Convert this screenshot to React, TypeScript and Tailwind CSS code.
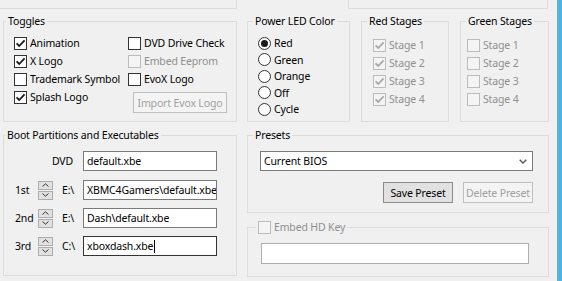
import { ReactNode } from "react";

function Group({
  title,
  className,
  legendClass,
  children,
}: {
  title: ReactNode;
  className: string;
  legendClass: string;
  children?: ReactNode;
}) {
  return (
    <fieldset className={`min-w-0 border border-[#dcdcdc] ${className}`}>
      <legend className={`px-[2px] leading-[14px] ${legendClass}`}>{title}</legend>
      {children}
    </fieldset>
  );
}

function Check({ checked, disabled }: { checked?: boolean; disabled?: boolean }) {
  return (
    <span
      className={`flex h-[13px] w-[13px] shrink-0 items-center justify-center border ${
        disabled ? "border-[#bcbcbc] bg-[#f4f4f4]" : "border-[#333333] bg-white"
      }`}
    >
      {checked && (
        <svg width="11" height="11" viewBox="0 0 11 11">
          <path
            d="M1.6 5.4 L4.2 8 L9.6 2.4"
            fill="none"
            stroke={disabled ? "#a8a8a8" : "#1a1a1a"}
            strokeWidth="1.8"
          />
        </svg>
      )}
    </span>
  );
}

function CheckRow({ label, checked, disabled }: { label: string; checked?: boolean; disabled?: boolean }) {
  return (
    <div className="flex h-[18px] items-center gap-[3px] whitespace-nowrap">
      <Check checked={checked} disabled={disabled} />
      <span className={disabled ? "text-[#8f8f8f]" : ""}>{label}</span>
    </div>
  );
}

function Radio({ label, checked }: { label: string; checked?: boolean }) {
  return (
    <div className="flex h-[16.5px] items-center gap-[3px]">
      <span className="flex h-[13px] w-[13px] items-center justify-center rounded-full border border-[#333333] bg-white">
        {checked && <span className="h-[7px] w-[7px] rounded-full bg-[#1a1a1a]" />}
      </span>
      <span>{label}</span>
    </div>
  );
}

function Spinner() {
  return (
    <div className="flex w-[15px] flex-col gap-[1px]">
      <span className="flex h-[9px] items-center justify-center border border-[#adadad] bg-[#e1e1e1]">
        <svg width="7" height="4" viewBox="0 0 7 4">
          <path d="M0.5 3.5 L3.5 0.8 L6.5 3.5" fill="none" stroke="#333" strokeWidth="1" />
        </svg>
      </span>
      <span className="flex h-[9px] items-center justify-center border border-[#adadad] bg-[#e1e1e1]">
        <svg width="7" height="4" viewBox="0 0 7 4">
          <path d="M0.5 0.5 L3.5 3.2 L6.5 0.5" fill="none" stroke="#333" strokeWidth="1" />
        </svg>
      </span>
    </div>
  );
}

const bootRows = [
  { label: "1st", drive: "E:\\", value: "XBMC4Gamers\\default.xbe" },
  { label: "2nd", drive: "E:\\", value: "Dash\\default.xbe" },
  { label: "3rd", drive: "C:\\", value: "xboxdash.xbe", focused: true },
];

export default function App() {
  return (
    <div className="flex h-[281px] w-[562px] overflow-hidden bg-[#f0f0f0] font-['Noto_Sans',sans-serif] text-[10.5px] leading-[14px] tracking-[-0.15px] text-black">
      <div className="flex w-[556px] flex-col">
        <div className="flex h-[9px]">
          <div className="ml-[-1px] w-[238px] border-b border-r border-[#dcdcdc]" />
          <div className="ml-[111px] w-[200px] border-x border-b border-[#dcdcdc]" />
        </div>

        <div className="mt-[5px] flex h-[108px]">
          <Group title="Toggles" className="ml-[3px] w-[234px]" legendClass="ml-[2px]">
            <div className="grid grid-cols-[114px_1fr] pl-[10px] pt-[6px]">
              <CheckRow label="Animation" checked />
              <CheckRow label="DVD Drive Check" />
              <CheckRow label="X Logo" checked />
              <CheckRow label="Embed Eeprom" disabled />
              <CheckRow label="Trademark Symbol" />
              <CheckRow label="EvoX Logo" />
              <CheckRow label="Splash Logo" checked />
              <div className="h-[18px]">
                <button className="ml-[5px] mt-[4px] h-[21px] w-[94px] whitespace-nowrap border border-[#bfbfbf] bg-[#f4f4f4] text-[#a0a0a0]">
                  Import Evox Logo
                </button>
              </div>
            </div>
          </Group>

          <Group title="Power LED Color" className="ml-[10px] w-[103px]" legendClass="ml-[5px]">
            <div className="flex flex-col pl-[10px] pt-[7px]">
              <Radio label="Red" checked />
              <Radio label="Green" />
              <Radio label="Orange" />
              <Radio label="Off" />
              <Radio label="Cycle" />
            </div>
          </Group>

          <Group title="Red Stages" className="ml-[11px] w-[88px]" legendClass="ml-[5px]">
            <div className="flex flex-col pl-[11px] pt-[8px]">
              {[1, 2, 3, 4].map((n) => (
                <CheckRow key={n} label={`Stage ${n}`} checked disabled />
              ))}
            </div>
          </Group>

          <Group title="Green Stages" className="ml-[11px] w-[89px]" legendClass="ml-[5px]">
            <div className="flex flex-col pl-[6px] pt-[8px]">
              {[1, 2, 3, 4].map((n) => (
                <CheckRow key={n} label={`Stage ${n}`} disabled />
              ))}
            </div>
          </Group>
        </div>

        <div className="mt-[6px] flex">
          <Group
            title="Boot Partitions and Executables"
            className="ml-[3px] h-[148px] w-[234px]"
            legendClass="ml-[1px]"
          >
            <div className="flex flex-col gap-[8px] pl-[11px] pt-[9px]">
              <div className="mb-[1px] flex h-[20px] items-center">
                <span className="w-[68px] pr-[10px] text-right">DVD</span>
                <div className="flex h-[20px] w-[134px] items-center border border-[#7a7a7a] bg-white px-[3px]">
                  default.xbe
                </div>
              </div>
              {bootRows.map((row) => (
                <div key={row.label} className="flex h-[20px] items-center">
                  <span className="w-[23px]">{row.label}</span>
                  <Spinner />
                  <span className="w-[30px] pl-[9px]">{row.drive}</span>
                  <div
                    className={`flex h-[20px] w-[134px] items-center overflow-hidden whitespace-nowrap border bg-white px-[3px] ${
                      row.focused ? "border-[#333333]" : "border-[#7a7a7a]"
                    }`}
                  >
                    {row.value}
                    {row.focused && <span className="ml-[1px] h-[13px] w-[1px] shrink-0 bg-black" />}
                  </div>
                </div>
              ))}
            </div>
          </Group>

          <div className="ml-[10px] flex w-[302px] flex-col">
            <Group title="Presets" className="h-[85px]" legendClass="ml-[5px]">
              <div className="flex flex-col pl-[12px] pt-[9px]">
                <div className="flex h-[20px] w-[273px] items-center justify-between border border-[#7a7a7a] bg-white pl-[3px] pr-[5px]">
                  <span>Current BIOS</span>
                  <svg width="8" height="5" viewBox="0 0 8 5">
                    <path d="M0.7 0.7 L4 4 L7.3 0.7" fill="none" stroke="#555" strokeWidth="1.3" />
                  </svg>
                </div>
                <div className="mt-[11px] flex w-[273px] justify-end gap-[10px]">
                  <button className="h-[21px] w-[70px] whitespace-nowrap border border-[#8c8c8c] bg-[#e1e1e1]">
                    Save Preset
                  </button>
                  <button className="h-[21px] w-[70px] whitespace-nowrap border border-[#bfbfbf] bg-[#f4f4f4] text-[#a0a0a0]">
                    Delete Preset
                  </button>
                </div>
              </div>
            </Group>

            <Group
              title={
                <span className="flex items-center gap-[3px] text-[#8f8f8f]">
                  <Check disabled />
                  Embed HD Key
                </span>
              }
              className="mt-[7px] h-[57px]"
              legendClass="ml-[8px]"
            >
              <div className="pl-[13px] pt-[9px]">
                <div className="h-[21px] w-[268px] border border-[#adadad] bg-white" />
              </div>
            </Group>
          </div>
        </div>
      </div>
      <div className="w-[6px] border-l border-[#e8f4fb] bg-[#4fb4e4]" />
    </div>
  );
}
